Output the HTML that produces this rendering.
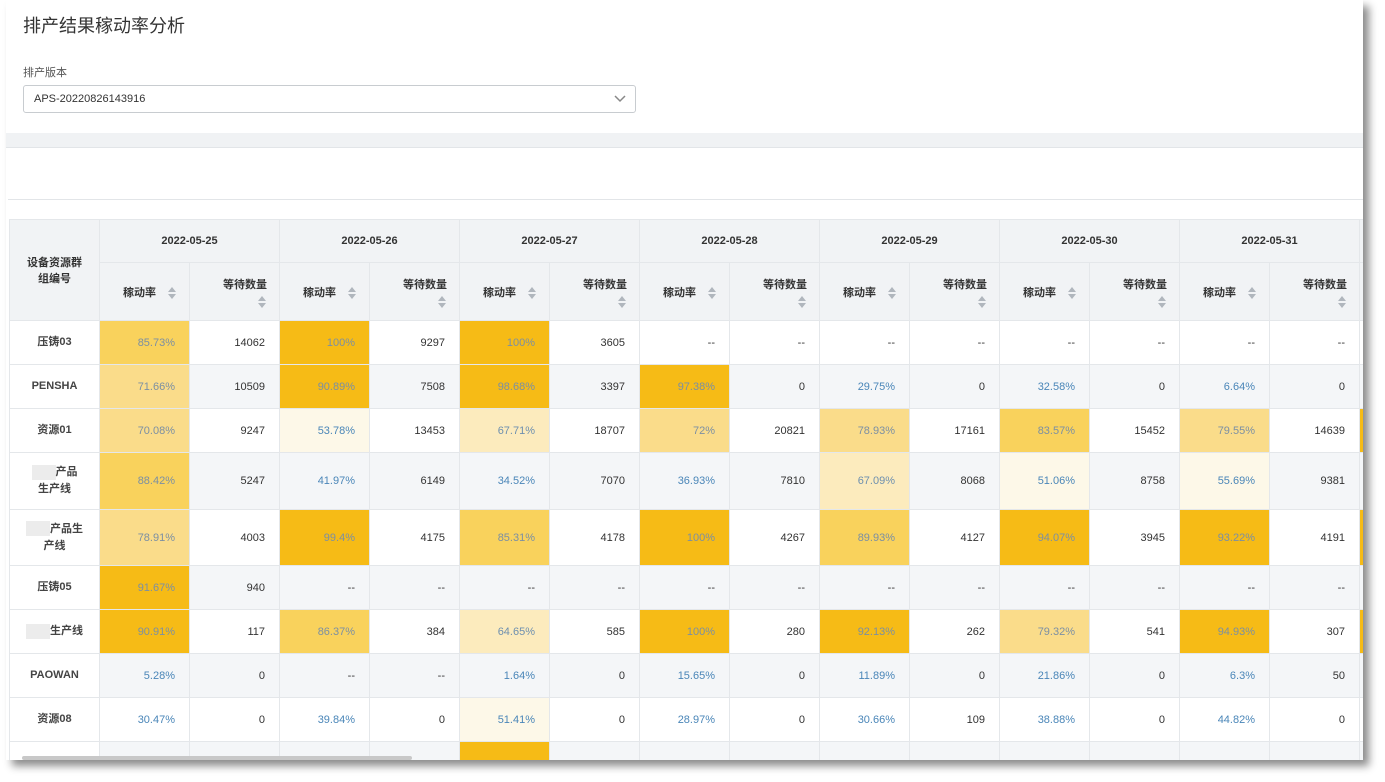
<!DOCTYPE html>
<html><head><meta charset="utf-8"><style>
*{box-sizing:border-box;margin:0;padding:0}
body{width:1385px;height:782px;background:#fff;font-family:"Liberation Sans","Noto Sans CJK SC",sans-serif;position:relative;overflow:hidden}
.page{position:absolute;left:6px;top:0;width:1357px;height:760px;background:#fff;box-shadow:6px 6px 8px rgba(0,0,0,.45);overflow:hidden}
.title{position:absolute;left:17px;top:12px;font-size:18px;color:#333}
.lbl{position:absolute;left:17px;top:64px;font-size:11px;color:#555}
.sel{position:absolute;left:17px;top:85px;width:613px;height:28px;border:1px solid #c8ccd0;border-radius:3px;font-size:11px;color:#333;padding:7px 10px}
.sel svg{position:absolute;right:9px;top:9px}
.band{position:absolute;left:0;top:133px;width:1357px;height:15px;background:#f0f2f4;border-bottom:1px solid #e2e5e8}
.line{position:absolute;left:2px;top:199px;width:1355px;height:1px;background:#e2e5e8}
.wrap{position:absolute;left:3px;top:219px;width:1354px;height:541px;overflow:hidden}
table{border-collapse:collapse;table-layout:fixed;width:1530px}
col{width:90px}
td,th{border:1px solid #e4e7ea;font-size:11px;overflow:hidden;white-space:nowrap}
th{background:#f1f3f5;color:#333;font-weight:bold}
.h1 th{height:43px}
.h2 th{height:58px;text-align:right;padding-right:12px}
td{height:44px;text-align:right;padding-right:14px;color:#333}
td.n{text-align:center;padding:0 4px;white-space:normal;line-height:17px;background:#fff!important;font-weight:bold;color:#444}
tr.g td{background:#f4f6f8}
td.p{color:#4a86b8}
.t1{background:#f6bb16!important;color:#7b8fa3!important}
.t2{background:#f9d25c!important;color:#7b8fa3!important}
.t3{background:#fadc8a!important;color:#7b8fa3!important}
.t4{background:#fcebbd!important;color:#6d8faf!important}
.t5{background:#fdf8e8!important}
.s{display:inline-block;width:9px;height:12px;vertical-align:middle;margin-left:12px;position:relative}
.s:before{content:"";position:absolute;left:0;top:0;border:4.5px solid transparent;border-bottom:5px solid #b0b6bd;border-top:0}
.s:after{content:"";position:absolute;left:0;top:7px;border:4.5px solid transparent;border-top:5px solid #b0b6bd;border-bottom:0}
.blur{display:inline-block;width:24px;height:15px;background:#ececec;vertical-align:middle}
.scroll{position:absolute;left:22px;top:756px;width:390px;height:4px;background:#c8c8c8;border-radius:2px}
</style></head><body>
<div class="page">
<div class="title">排产结果稼动率分析</div>
<div class="lbl">排产版本</div>
<div class="sel">APS-20220826143916<svg width="12" height="8" viewBox="0 0 12 8"><path d="M1 1l5 5 5-5" stroke="#888" stroke-width="1.5" fill="none"/></svg></div>
<div class="band"></div>
<div class="line"></div>
<div class="wrap"><table>
<colgroup><col><col><col><col><col><col><col><col><col><col><col><col><col><col><col><col><col></colgroup>
<tr class="h1"><th rowspan="2">设备资源群<br>组编号</th><th colspan="2">2022-05-25</th><th colspan="2">2022-05-26</th><th colspan="2">2022-05-27</th><th colspan="2">2022-05-28</th><th colspan="2">2022-05-29</th><th colspan="2">2022-05-30</th><th colspan="2">2022-05-31</th><th colspan="2">2022-06-01</th></tr>
<tr class="h2"><th>稼动率<span class="s"></span></th><th>等待数量<br><span class="s" style="margin:4px 0 0"></span></th><th>稼动率<span class="s"></span></th><th>等待数量<br><span class="s" style="margin:4px 0 0"></span></th><th>稼动率<span class="s"></span></th><th>等待数量<br><span class="s" style="margin:4px 0 0"></span></th><th>稼动率<span class="s"></span></th><th>等待数量<br><span class="s" style="margin:4px 0 0"></span></th><th>稼动率<span class="s"></span></th><th>等待数量<br><span class="s" style="margin:4px 0 0"></span></th><th>稼动率<span class="s"></span></th><th>等待数量<br><span class="s" style="margin:4px 0 0"></span></th><th>稼动率<span class="s"></span></th><th>等待数量<br><span class="s" style="margin:4px 0 0"></span></th><th>稼动率</th><th>等待数量</th></tr>
<tr><td class="n">压铸03</td><td class="p t2">85.73%</td><td>14062</td><td class="p t1">100%</td><td>9297</td><td class="p t1">100%</td><td>3605</td><td>--</td><td>--</td><td>--</td><td>--</td><td>--</td><td>--</td><td>--</td><td>--</td><td>--</td><td>--</td></tr>
<tr class="g"><td class="n" style="height:43px">PENSHA</td><td class="p t3">71.66%</td><td>10509</td><td class="p t1">90.89%</td><td>7508</td><td class="p t1">98.68%</td><td>3397</td><td class="p t1">97.38%</td><td>0</td><td class="p">29.75%</td><td>0</td><td class="p">32.58%</td><td>0</td><td class="p">6.64%</td><td>0</td><td class="p">0%</td><td>0</td></tr>
<tr><td class="n">资源01</td><td class="p t3">70.08%</td><td>9247</td><td class="p t5">53.78%</td><td>13453</td><td class="p t4">67.71%</td><td>18707</td><td class="p t3">72%</td><td>20821</td><td class="p t3">78.93%</td><td>17161</td><td class="p t2">83.57%</td><td>15452</td><td class="p t3">79.55%</td><td>14639</td><td class="p t1">90%</td><td>0</td></tr>
<tr class="g"><td class="n" style="height:57px"><span class="blur"></span>产品<br>生产线</td><td class="p t2">88.42%</td><td>5247</td><td class="p">41.97%</td><td>6149</td><td class="p">34.52%</td><td>7070</td><td class="p">36.93%</td><td>7810</td><td class="p t4">67.09%</td><td>8068</td><td class="p t5">51.06%</td><td>8758</td><td class="p t5">55.69%</td><td>9381</td><td class="p">0%</td><td>0</td></tr>
<tr><td class="n" style="height:56px"><span class="blur"></span>产品生<br>产线</td><td class="p t3">78.91%</td><td>4003</td><td class="p t1">99.4%</td><td>4175</td><td class="p t2">85.31%</td><td>4178</td><td class="p t1">100%</td><td>4267</td><td class="p t2">89.93%</td><td>4127</td><td class="p t1">94.07%</td><td>3945</td><td class="p t1">93.22%</td><td>4191</td><td class="p t1">90%</td><td>0</td></tr>
<tr class="g"><td class="n">压铸05</td><td class="p t1">91.67%</td><td>940</td><td>--</td><td>--</td><td>--</td><td>--</td><td>--</td><td>--</td><td>--</td><td>--</td><td>--</td><td>--</td><td>--</td><td>--</td><td>--</td><td>--</td></tr>
<tr><td class="n" style="height:43px"><span class="blur"></span>生产线</td><td class="p t1">90.91%</td><td>117</td><td class="p t2">86.37%</td><td>384</td><td class="p t4">64.65%</td><td>585</td><td class="p t1">100%</td><td>280</td><td class="p t1">92.13%</td><td>262</td><td class="p t3">79.32%</td><td>541</td><td class="p t1">94.93%</td><td>307</td><td class="p t1">90%</td><td>0</td></tr>
<tr class="g"><td class="n">PAOWAN</td><td class="p">5.28%</td><td>0</td><td>--</td><td>--</td><td class="p">1.64%</td><td>0</td><td class="p">15.65%</td><td>0</td><td class="p">11.89%</td><td>0</td><td class="p">21.86%</td><td>0</td><td class="p">6.3%</td><td>50</td><td class="p">0%</td><td>0</td></tr>
<tr><td class="n">资源08</td><td class="p">30.47%</td><td>0</td><td class="p">39.84%</td><td>0</td><td class="p t5">51.41%</td><td>0</td><td class="p">28.97%</td><td>0</td><td class="p">30.66%</td><td>109</td><td class="p">38.88%</td><td>0</td><td class="p">44.82%</td><td>0</td><td class="p">0%</td><td>0</td></tr>
<tr class="g"><td class="n"></td><td></td><td></td><td></td><td></td><td class="t1"></td><td></td><td></td><td></td><td></td><td></td><td></td><td></td><td></td><td></td><td></td><td></td></tr>
</table></div>
</div>
<div class="scroll"></div>
</body></html>
